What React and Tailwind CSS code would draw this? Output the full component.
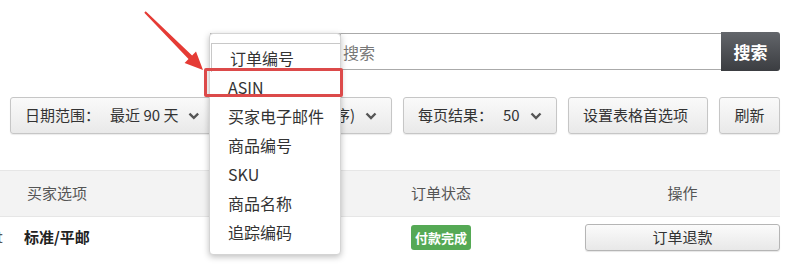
import React from 'react';

const font = { fontFamily: '"Microsoft YaHei", "Noto Sans CJK SC", "Noto Sans", sans-serif' };

const options = ['订单编号', 'ASIN', '买家电子邮件', '商品编号', 'SKU', '商品名称', '追踪编码'];

const Chevron = () => (
  <svg width="12" height="8" viewBox="0 0 12 8" className="ml-[10px]">
    <path d="M1.5 1.5 L6 6 L10.5 1.5" fill="none" stroke="#555" strokeWidth="2.4" />
  </svg>
);

const FilterButton = ({ children, className = '' }) => (
  <button
    className={`h-[37px] flex items-center px-[14px] rounded-[3px] border border-[#c6c6c6] bg-gradient-to-b from-[#fafafa] to-[#e9e9e9] text-[15px] text-[#333] shadow-[0_1px_1px_rgba(0,0,0,0.08)] whitespace-nowrap overflow-hidden ${className}`}
  >
    {children}
  </button>
);

const App = () => {
  return (
    <div className="relative w-[799px] h-[275px] bg-white overflow-hidden" style={font}>
      {/* search bar */}
      <div className="flex pt-[33px] pl-[210px] pr-[19px]">
        <div className="w-[131px] h-[37px] border border-[#bbb] bg-[#f5f5f5]" />
        <div className="flex-1 h-[37px] border-y border-[#aaa] flex items-center pl-[2px] text-[16px] text-[#777]">
          搜索
        </div>
        <button className="w-[59px] h-[39px] -mt-[1px] rounded-r-[3px] bg-gradient-to-b from-[#63666b] to-[#3b3d41] text-white text-[17px] font-bold">
          搜索
        </button>
      </div>

      {/* filters */}
      <div className="flex mt-[26px] pl-[10px] gap-[11px]">
        <FilterButton className="w-[205px]">
          日期范围：<span className="ml-[10px]">最近 90 天</span>
          <Chevron />
        </FilterButton>
        <FilterButton className="w-[166px] justify-end">
          订单日期 (降序)
          <Chevron />
        </FilterButton>
        <FilterButton className="w-[154px]">
          每页结果：<span className="ml-[10px]">50</span>
          <Chevron />
        </FilterButton>
        <FilterButton className="w-[140px]">设置表格首选项</FilterButton>
        <FilterButton className="w-[61px] justify-center">刷新</FilterButton>
      </div>

      {/* table */}
      <div className="mt-[36px] w-[780px]">
        <div className="h-[47px] bg-[#f3f3f3] border-y border-[#e6e6e6] flex items-center text-[15px] text-[#555]">
          <div className="w-[411px] pl-[27px]">买家选项</div>
          <div className="w-[174px]">订单状态</div>
          <div className="flex-1 text-center">操作</div>
        </div>
        <div className="h-[40px] flex items-center text-[15px] text-[#222]">
          <div className="w-[27px] -ml-[3px] text-[#555]">t</div>
          <div className="w-[387px] font-bold">标准/平邮</div>
          <div className="w-[174px]">
            <span className="inline-block rounded-[3px] bg-[#55a955] text-white text-[13px] font-bold px-[4px] leading-[25px]">
              付款完成
            </span>
          </div>
          <button className="flex-1 h-[27px] rounded-[3px] border border-[#b5b5b5] bg-gradient-to-b from-[#fbfbfb] to-[#e8e8e8] text-[15px] text-[#333] shadow-[0_1px_1px_rgba(0,0,0,0.1)]">
            订单退款
          </button>
        </div>
      </div>

      {/* open dropdown */}
      <div className="absolute left-[209px] top-[33px] w-[132px] h-[222px] bg-white rounded-[4px] border border-[#d4d4d4] shadow-[0_2px_6px_rgba(0,0,0,0.25)] pt-[9px]">
        {options.map((o, i) => (
          <div
            key={o}
            className={`h-[29px] flex items-center pl-[18px] text-[16px] text-[#333] ${
              i === 0 ? 'border-t border-l border-[#c8c8c8] ml-[1px] pl-[17px]' : ''
            }`}
          >
            {o}
          </div>
        ))}
      </div>

      {/* highlight box */}
      <div className="absolute left-[204px] top-[68px] w-[139px] h-[29px] border-[3px] border-[#dc4a4a] rounded-[2px]" />

      {/* arrow */}
      <svg className="absolute inset-0 pointer-events-none" width="799" height="275">
        <polygon
          points="144.3,12.7 145.7,11.3 192.1,55.5 196,51.6 203,70 184.6,63 188.5,59.1"
          fill="#e53b35"
        />
      </svg>
    </div>
  );
};

export default App;
